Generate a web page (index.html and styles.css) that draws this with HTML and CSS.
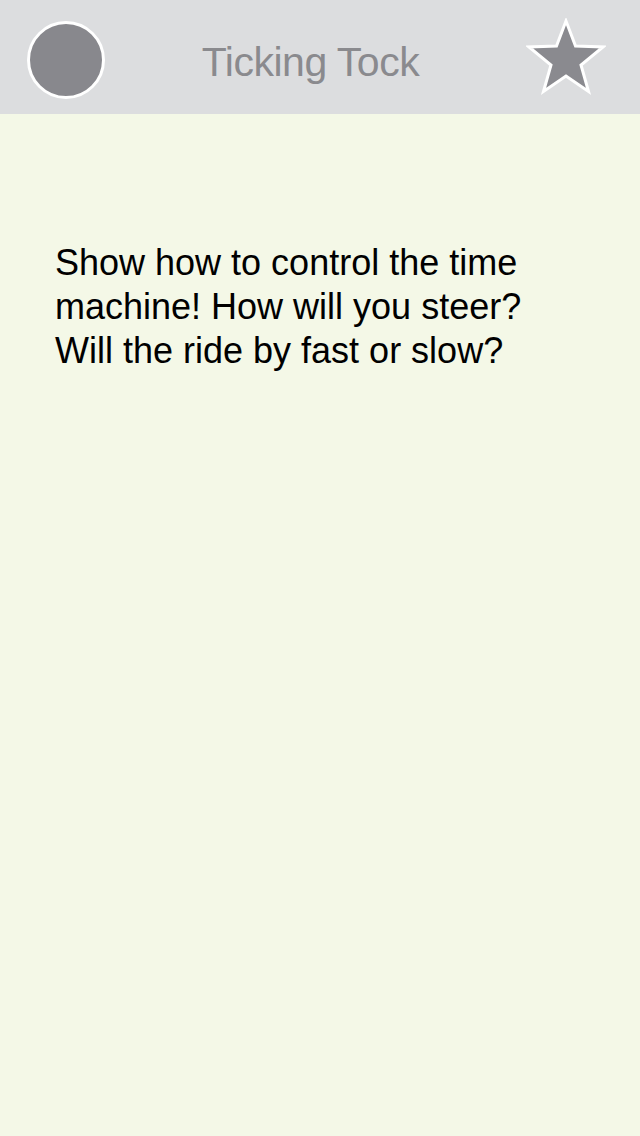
FILE: index.html
```html
<!DOCTYPE html>
<html>
<head>
<meta charset="utf-8">
<link rel="stylesheet" href="styles.css">
</head>
<body>
<header class="bar">
  <div class="avatar"></div>
  <h1 class="title">Ticking Tock</h1>
  <svg class="star" width="80" height="78" viewBox="0 0 80 78">
    <polygon points="40,3 49.5,28 77,29 55,47 62.5,73.5 40,58 17.5,73.5 25,47 3,29 30.5,28" fill="#8a8a8f" stroke="#fff" stroke-width="3" stroke-linejoin="miter"/>
  </svg>
</header>
<main class="content">
  <p class="prompt">Show how to control the time machine! How will you steer? Will the ride by fast or slow?</p>
</main>
</body>
</html>
```
FILE: styles.css
```css
html, body {
  margin: 0;
  padding: 0;
}
body {
  width: 640px;
  height: 1136px;
  background: #f4f8e7;
  font-family: "Liberation Sans", Arial, sans-serif;
  overflow: hidden;
}
.bar {
  height: 114px;
  background: #dcdddf;
  display: flex;
  align-items: center;
  justify-content: space-between;
  padding: 0 34px 0 27px;
  box-sizing: border-box;
}
.avatar {
  width: 72px;
  height: 72px;
  border-radius: 50%;
  background: #88888d;
  border: 3px solid #fff;
  margin-top: 6px;
}
.title {
  margin: 10px 0 0 -10px;
  font-weight: normal;
  font-size: 41px;
  color: #8a8a8e;
  letter-spacing: -0.5px;
}
.star {
  display: block;
}
.content {
  padding: 127px 0 0 55px;
}
.prompt {
  margin: 0;
  width: 490px;
  font-size: 36px;
  line-height: 44px;
  color: #000;
}
```
